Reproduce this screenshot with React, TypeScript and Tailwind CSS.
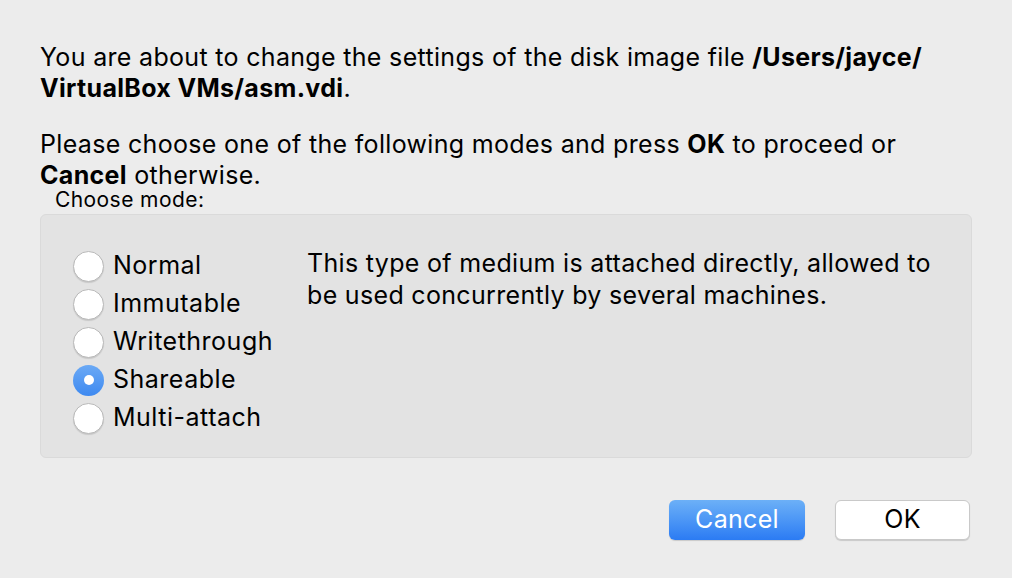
const modes = ["Normal", "Immutable", "Writethrough", "Shareable", "Multi-attach"];

function Radio({ checked }: { checked: boolean }) {
  if (checked) {
    return (
      <span className="flex h-[31px] w-[31px] items-center justify-center rounded-full bg-gradient-to-b from-[#6aa9f5] to-[#3d89f0]">
        <span className="h-[10px] w-[10px] rounded-full bg-white" />
      </span>
    );
  }
  return (
    <span className="block h-[31px] w-[31px] rounded-full border border-[#b9b9b9] bg-white shadow-[0_1px_1px_rgba(0,0,0,0.12)]" />
  );
}

export default function App() {
  const selected = "Shareable";
  return (
    <div
      className="h-[578px] w-[1012px] bg-[#ececec] px-[40px] pt-[42px] tracking-[0.02em] text-black"
      style={{ fontFamily: 'Inter, "Liberation Sans", Arial, sans-serif' }}
    >
      <p className="text-[25px] leading-[31px]">
        You are about to change the settings of the disk image file <b>/Users/jayce/</b>
        <br />
        <b>VirtualBox VMs/asm.vdi</b>.
      </p>
      <p className="mt-[25px] text-[25px] leading-[31px]">
        Please choose one of the following modes and press <b>OK</b> to proceed or
        <br />
        <b>Cancel</b> otherwise.
      </p>
      <div className="ml-[15px] mt-[0px] text-[21px] leading-[18px] tracking-[0.02em]">Choose mode:</div>
      <div className="mt-[5px] flex h-[244px] rounded-[6px] border border-[#dadada] bg-[#e3e3e3] pl-[32px] pt-[32px]">
        <div className="flex w-[234px] flex-col">
          {modes.map((m) => (
            <div key={m} className="flex h-[38px] items-center gap-[9px]">
              <Radio checked={m === selected} />
              <span className="text-[25px] tracking-[0.02em]">{m}</span>
            </div>
          ))}
        </div>
        <p className="w-[650px] text-[25px] leading-[32px]">
          This type of medium is attached directly, allowed to
          <br />
          be used concurrently by several machines.
        </p>
      </div>
      <div className="mt-[42px] flex justify-end gap-[30px] pr-[2px]">
        <button className="h-[40px] w-[136px] rounded-[6px] bg-gradient-to-b from-[#6cb0f7] to-[#2b7bf3] text-[25px] text-white shadow-[0_1px_1px_rgba(0,0,0,0.15)]">
          Cancel
        </button>
        <button className="h-[40px] w-[135px] rounded-[6px] border border-[#c9c9c9] bg-white text-[25px] shadow-[0_1px_1px_rgba(0,0,0,0.15)]">
          OK
        </button>
      </div>
    </div>
  );
}
